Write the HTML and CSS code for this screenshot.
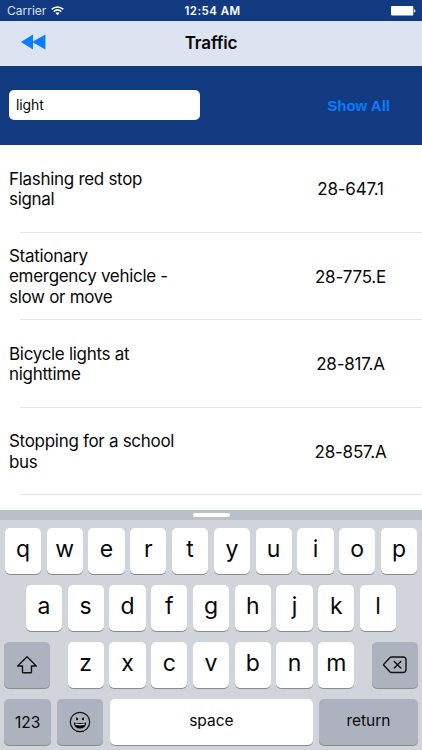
FILE: index.html
```html
<!DOCTYPE html>
<html lang="en">
<head>
<meta charset="utf-8">
<title>Traffic</title>
<link rel="stylesheet" href="styles.css">
</head>
<body>
<div class="screen">
  <header class="status">
    <div class="carrier"><span>Carrier</span>
      <svg class="wifi" width="13" height="10" viewBox="0 0 13 10" fill="none" stroke="#fff" stroke-width="1.6"><path d="M.7 3.4C4 .2 9 .2 12.3 3.4M2.8 5.6c2.2-2 5.2-2 7.4 0"/><path d="M6.5 9.2 4.5 7.1c1.2-1 2.8-1 4 0z" fill="#fff" stroke="none"/></svg>
    </div>
    <div class="clock">12:54 AM</div>
    <svg class="battery" width="25" height="10" viewBox="0 0 25 10" fill="#fff"><rect width="22.3" height="9.6" rx="1"/><path d="M23 3.2c1.8.2 1.8 3 0 3.2z"/></svg>
  </header>
  <nav class="nav">
    <svg class="rewind" width="25" height="16" viewBox="0 0 25 16" fill="#087dff"><path d="M0 8 12 .6V7.400L24.400.5v15L12 8.600v6.800z"/></svg>
    <h1>Traffic</h1>
  </nav>
  <section class="search">
    <input class="field" type="text" value="light" aria-label="Search">
    <button class="show-all">Show All</button>
  </section>
  <main class="list">
    <div class="row"><div class="name">Flashing red stop<br>signal</div><div class="code">28-647.1</div></div>
    <div class="row"><div class="name">Stationary<br>emergency vehicle -<br>slow or move</div><div class="code">28-775.E</div></div>
    <div class="row"><div class="name">Bicycle lights at<br>nighttime</div><div class="code">28-817.A</div></div>
    <div class="row"><div class="name">Stopping for a school<br>bus</div><div class="code">28-857.A</div></div>
  </main>
  <section class="keyboard">
    <div class="handle"><i></i></div>
    <div class="keys">
      <div class="krow"><b>q</b><b>w</b><b>e</b><b>r</b><b>t</b><b>y</b><b>u</b><b>i</b><b>o</b><b>p</b></div>
      <div class="krow"><b>a</b><b>s</b><b>d</b><b>f</b><b>g</b><b>h</b><b>j</b><b>k</b><b>l</b></div>
      <div class="krow spread">
        <b class="dark wide"><svg width="22" height="20" viewBox="0 0 22 20" fill="none" stroke="#111" stroke-width="1.4" stroke-linejoin="round"><path d="M11 1.800 20.300 11H15.500v5.900q0 .9-.9.9H7.400q-.9 0-.9-.9V11H1.700z"/></svg></b>
        <div class="krow"><b>z</b><b>x</b><b>c</b><b>v</b><b>b</b><b>n</b><b>m</b></div>
        <b class="dark wide"><svg width="24" height="18" viewBox="0 0 24 18" fill="none" stroke="#111" stroke-width="1.4" stroke-linejoin="round" stroke-linecap="round"><path d="M8.500 1H20q3 0 3 3v9.500q0 3-3 3H8.500q-.9 0-1.600-.7L.8 9.300q-.5-.5 0-1L6.900 1.700Q7.600 1 8.500 1zM11.300 5.500l6.500 6.500m0-6.500L11.300 12"/></svg></b>
      </div>
      <div class="krow bottom">
        <b class="dark num">123</b>
        <b class="dark emoji"><svg width="22" height="22" viewBox="0 0 22 22"><circle cx="11" cy="11" r="9.700" fill="none" stroke="#111" stroke-width="1.200"/><ellipse cx="8" cy="7.900" rx="1" ry="1.400"/><ellipse cx="14" cy="7.900" rx="1" ry="1.400"/><path d="M4.700 11.500q6.300 1.200 12.600 0-.6 6.100-6.300 6.100t-6.300-6.100z"/><path d="M5.900 12.500q5.100.8 10.200 0l-.4 1.300q-4.700 1-9.400 0z" fill="#d5d8de"/></svg></b>
        <b class="space">space</b>
        <b class="dark return">return</b>
      </div>
    </div>
  </section>
</div>
</body>
</html>
```
FILE: styles.css
```css
* { box-sizing: border-box; }
body { margin: 0; background: #fff; font-family: Inter, "Liberation Sans", sans-serif; color: #080808; }
.screen { width: 422px; height: 750px; overflow: hidden; display: flex; flex-direction: column; }
.status { height: 20.5px; flex: none; background: #113a81; color: #fff; display: grid; grid-template-columns: 1fr auto 1fr; align-items: center; padding: 1px 6px 0 7px; font-size: 12px; }
.carrier { display: flex; align-items: center; gap: 5px; color: #dbe3f0; letter-spacing: 0; }
.clock { font-weight: 600; font-size: 11.5px; letter-spacing: .45px; margin-left: 2px; }
.battery { justify-self: end; }
.nav { height: 45px; flex: none; background: #dce3f1; display: grid; grid-template-columns: 1fr auto 1fr; align-items: center; padding: 0 21px; }
.rewind { margin-top: -2px; }
h1 { margin: 0; grid-column: 2; font-size: 17px; font-weight: 600; letter-spacing: -.15px; }
.search { height: 79.5px; flex: none; background: #113a81; display: flex; align-items: center; justify-content: space-between; padding: 0 32px 0 9px; }
.field { width: 191px; height: 30px; border: 0; border-radius: 5px; background: #fff; padding: 0 7px 2px; font: 14px Inter, sans-serif; letter-spacing: -.1px; color: #080808; outline: 0; }
.show-all { border: 0; background: none; padding: 0; color: #087dff; font: bold 15px "Liberation Sans", sans-serif; letter-spacing: 0; }
.list { height: 364.5px; flex: none; overflow: hidden; }
.row { height: 87.5px; display: flex; align-items: center; justify-content: space-between; padding: 0 35px 0 9px; background: linear-gradient(#e4e4e5, #e4e4e5) 20px 100% / 100% 1px no-repeat; }
.name { font-size: 17px; line-height: 20.500px; padding-top: .5px; letter-spacing: -.3px; }
.code { width: 72px; margin-right: .5px; padding-top: 1px; text-align: center; white-space: nowrap; font-size: 17px; letter-spacing: -.2px; }
.keyboard { flex: 1; background: #d1d4db; }
.handle { height: 10.5px; background: #b9c0ca; display: flex; align-items: center; justify-content: center; }
.handle i { width: 37px; height: 4px; border-radius: 2px; background: #fff; }
.keys { padding: 7.500px 4.300px 0; display: flex; flex-direction: column; gap: 11.200px; }
.krow { display: flex; justify-content: center; gap: 5.600px; }
.spread { justify-content: space-between; }
b { display: flex; align-items: center; justify-content: center; width: 36.200px; height: 46px; padding-bottom: 3px; border-radius: 5px; background: #fff; box-shadow: 0 1px 0 #898b90; font-size: 23px; font-weight: 400; }
.dark { background: #adb3be; padding-bottom: 0; }
.wide { width: 45.700px; }
.bottom { gap: 6.500px; }
.bottom b { font-size: 15.500px; font-weight: 400; }
.bottom .num { width: 46.700px; }
.bottom .emoji { width: 46px; }
.bottom .space { flex: 1; padding-bottom: 4px; }
.bottom .return { width: 98.500px; padding-bottom: 4px; }
```
